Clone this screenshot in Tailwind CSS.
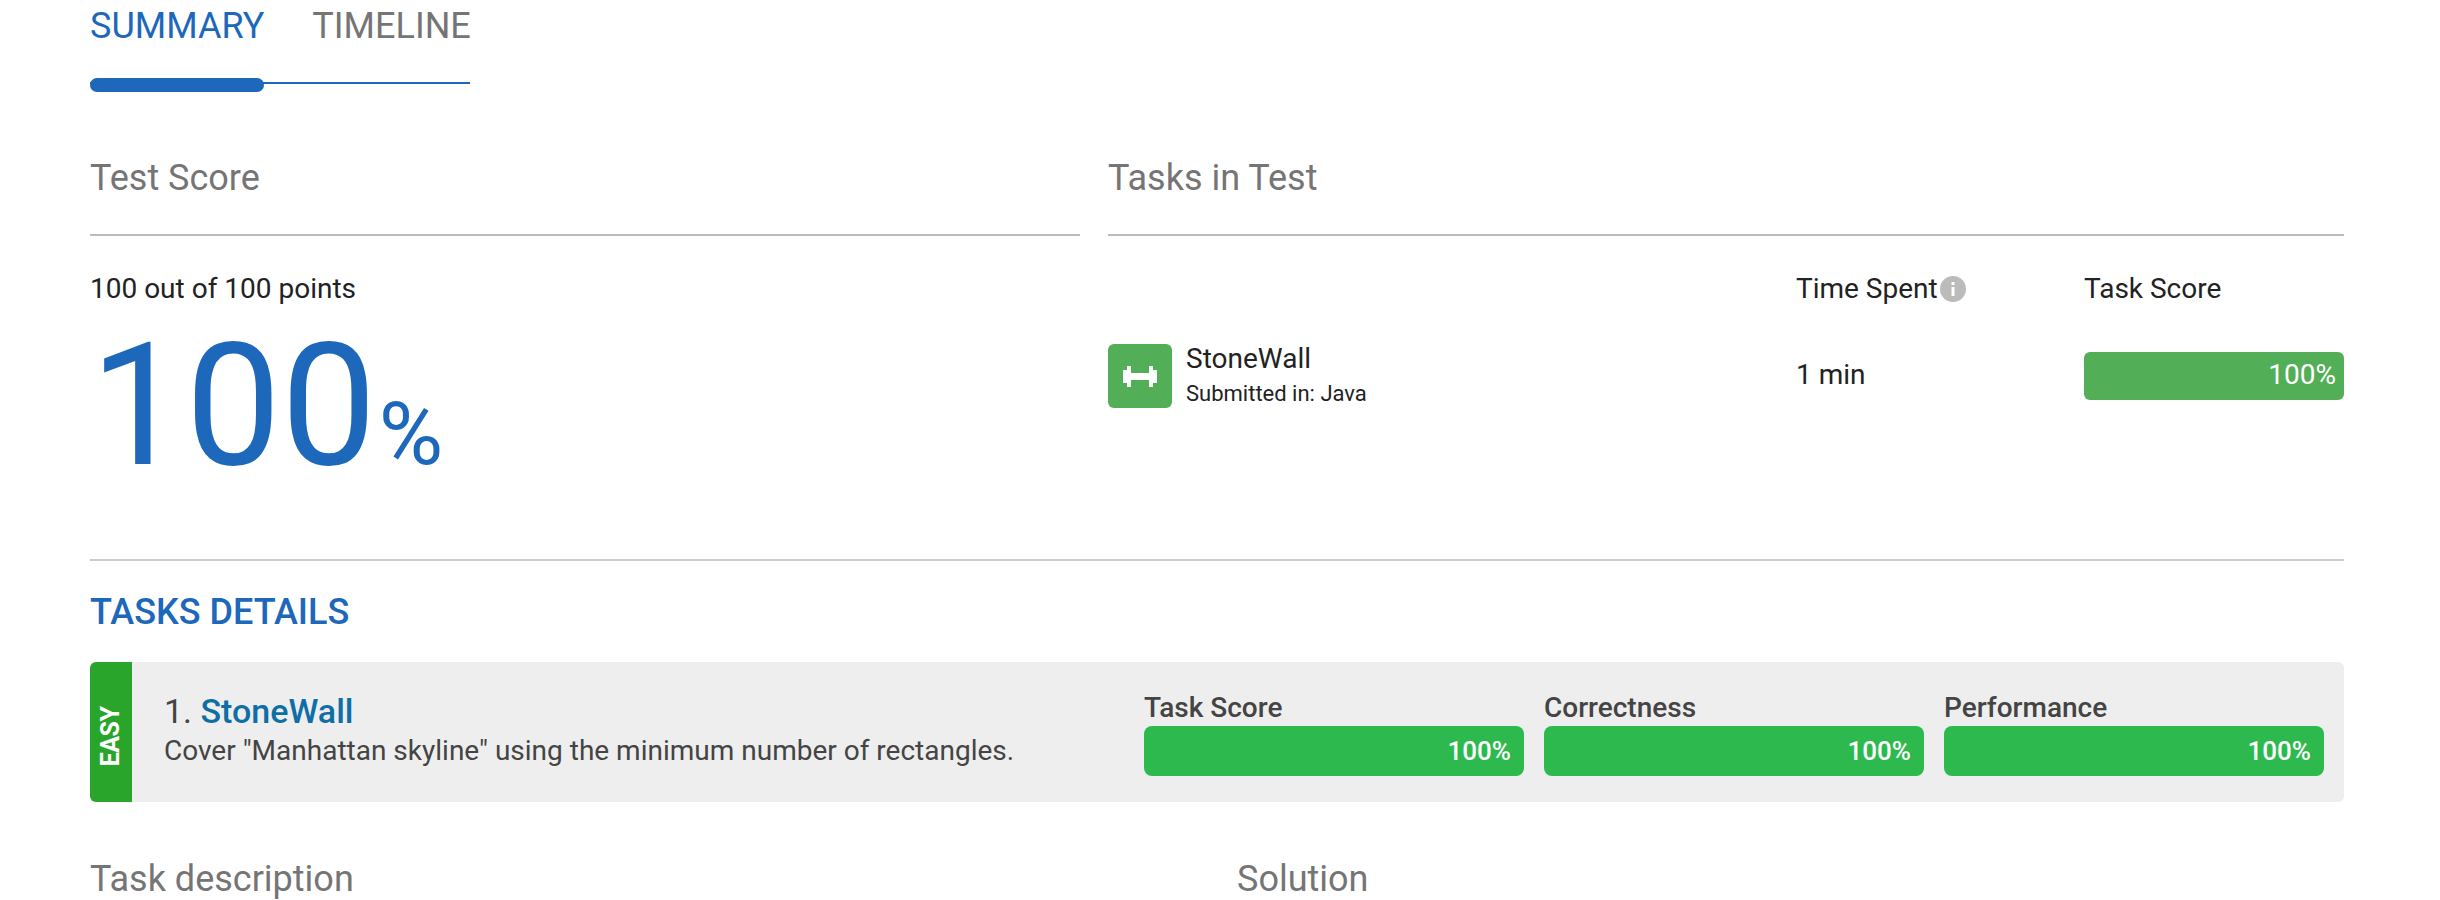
<!DOCTYPE html>
<html lang="en">
<head>
  <meta charset="UTF-8" />
  <title>Test Report</title>
  <script src="https://cdn.jsdelivr.net/npm/@tailwindcss/browser@4"></script>
</head>
<body class="bg-white h-[900px] overflow-hidden font-['Roboto',sans-serif] text-[#222]">
  <div class="w-[2254px] ml-[90px]">

    <!-- Tabs -->
    <div class="w-[380px]">
      <div class="flex gap-[48px] h-[52px] items-center text-[36px] leading-[52px]">
        <span class="text-[#1d68bb]">SUMMARY</span>
        <span class="text-[#757575]">TIMELINE</span>
      </div>
      <div class="relative h-[14px] mt-[26px]">
        <div class="absolute left-0 right-0 top-[4px] h-[2px] bg-[#1d68bb]"></div>
        <div class="absolute left-0 top-0 w-[174px] h-[14px] rounded-[7px] bg-[#1d68bb]"></div>
      </div>
    </div>

    <!-- Summary columns -->
    <div class="flex gap-[28px] mt-[60px]">
      <div class="w-[990px]">
        <h2 class="h-[84px] text-[36px] leading-[52px] text-[#757575] border-b-2 border-[#bbbbbb]">Test Score</h2>
        <p class="mt-[38px] text-[28px] leading-[30px]">100 out of 100 points</p>
        <div class="flex items-baseline text-[#1d68bb] mt-[17px] h-[170px] leading-[170px]">
          <span class="text-[170px]">100</span>
          <span class="text-[88px] ml-[2px]">%</span>
        </div>
      </div>
      <div class="flex-1">
        <h2 class="h-[84px] text-[36px] leading-[52px] text-[#757575] border-b-2 border-[#bbbbbb]">Tasks in Test</h2>
        <div class="flex mt-[38px] text-[28px] leading-[30px]">
          <div class="w-[688px]"></div>
          <div class="w-[288px] flex items-center gap-[2px]">
            Time Spent
            <svg class="w-[26px] h-[26px]" viewBox="0 0 26 26"><circle cx="13" cy="13" r="13" fill="#bbbbbb"/><rect x="11.5" y="6" width="3" height="3" fill="#fff"/><rect x="11.5" y="11" width="3" height="9" fill="#fff"/></svg>
          </div>
          <div>Task Score</div>
        </div>
        <div class="flex items-center mt-[39px]">
          <div class="w-[64px] h-[64px] rounded-[6px] bg-[#52ae57] flex items-center justify-center">
            <svg class="w-[34px] h-[21px]" viewBox="0 0 34 21" fill="#fff"><rect x="0" y="4" width="4" height="13"/><rect x="4" y="0" width="4" height="21"/><rect x="8" y="7" width="18" height="7"/><rect x="26" y="0" width="4" height="21"/><rect x="30" y="4" width="4" height="13"/></svg>
          </div>
          <div class="ml-[14px] w-[610px]">
            <div class="text-[28px] leading-[32px]">StoneWall</div>
            <div class="mt-[4px] text-[22px] leading-[30px]">Submitted in: Java</div>
          </div>
          <div class="w-[288px] text-[28px] pb-[2px]">1 min</div>
          <div class="w-[260px] h-[48px] rounded-[6px] bg-[#52ae57] text-white text-[28px] leading-[46px] text-right pr-[8px]">100%</div>
        </div>
      </div>
    </div>

    <!-- Tasks details -->
    <div class="mt-[68px] border-t-2 border-[#cccccc] pt-[31px]">
      <h2 class="text-[36px] leading-[40px] font-medium text-[#1d68bb]">TASKS DETAILS</h2>
      <div class="flex mt-[30px] h-[140px] rounded-[6px] bg-[#eeeeee] overflow-hidden">
        <div class="w-[42px] flex items-center justify-center bg-[#2aa52c]">
          <span class="mt-[8px] -rotate-90 text-white font-bold text-[25px] tracking-[-0.5px] leading-none">EASY</span>
        </div>
        <div class="w-[1012px] pl-[32px] pt-[29px] text-[#444]">
          <div class="text-[34px] leading-[40px]">1. <a class="font-medium text-[#0e6ea5]">StoneWall</a></div>
          <div class="mt-[3px] text-[28px] leading-[34px]">Cover "Manhattan skyline" using the minimum number of rectangles.</div>
        </div>
        <div class="flex gap-[20px] pt-[27px]">
          <div class="w-[380px]">
            <div class="text-[28px] leading-[37px] font-medium text-[#444]">Task Score</div>
            <div class="h-[50px] rounded-[8px] bg-[#2eb94f] text-white font-medium text-[26px] leading-[50px] text-right pr-[13px]">100%</div>
          </div>
          <div class="w-[380px]">
            <div class="text-[28px] leading-[37px] font-medium text-[#444]">Correctness</div>
            <div class="h-[50px] rounded-[8px] bg-[#2eb94f] text-white font-medium text-[26px] leading-[50px] text-right pr-[13px]">100%</div>
          </div>
          <div class="w-[380px]">
            <div class="text-[28px] leading-[37px] font-medium text-[#444]">Performance</div>
            <div class="h-[50px] rounded-[8px] bg-[#2eb94f] text-white font-medium text-[26px] leading-[50px] text-right pr-[13px]">100%</div>
          </div>
        </div>
      </div>
      <div class="flex mt-[55px] text-[36px] leading-[44px] text-[#757575]">
        <div class="w-[1147px]">Task description</div>
        <div>Solution</div>
      </div>
    </div>
  </div>
</body>
</html>
